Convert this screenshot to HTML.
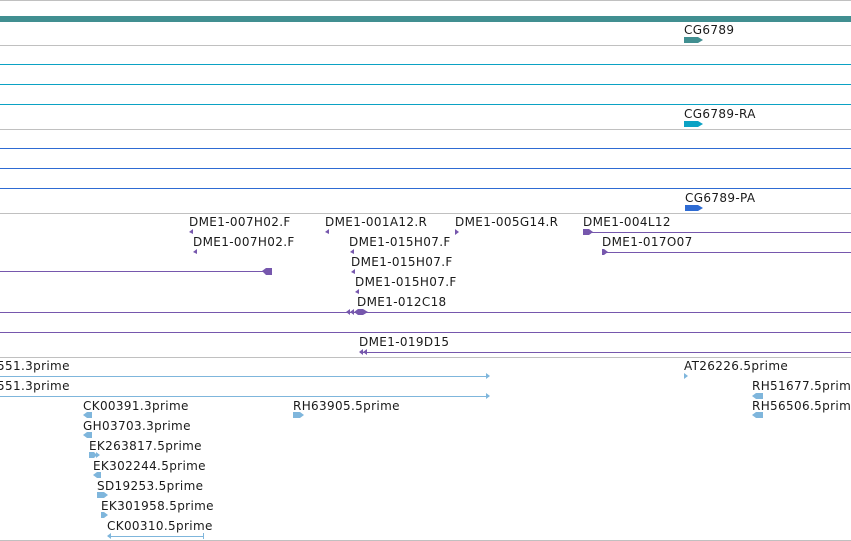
<!DOCTYPE html>
<html><head><meta charset="utf-8"><style>
html,body{margin:0;padding:0;background:#fff;width:851px;height:541px;overflow:hidden}
svg text{font-family:"DejaVu Sans","Liberation Sans",sans-serif;font-size:12px;letter-spacing:0.35px;fill:#1a1a1a}
</style></head><body>
<svg width="851" height="541" xmlns="http://www.w3.org/2000/svg">
<g stroke="#c0c0c0" stroke-width="1">
<line x1="0" y1="0.5" x2="851" y2="0.5"/>
<line x1="0" y1="45.5" x2="851" y2="45.5"/>
<line x1="0" y1="129.5" x2="851" y2="129.5"/>
<line x1="0" y1="213.5" x2="851" y2="213.5"/>
<line x1="0" y1="357.5" x2="851" y2="357.5"/>
<line x1="0" y1="540.5" x2="851" y2="540.5"/>
</g>
<rect x="0" y="16" width="851" height="6" fill="#418f91"/>
<g stroke="#0ba2c4" stroke-width="1">
<line x1="0" y1="64.5" x2="851" y2="64.5"/>
<line x1="0" y1="84.5" x2="851" y2="84.5"/>
<line x1="0" y1="104.5" x2="851" y2="104.5"/>
</g>
<g stroke="#2e6bd3" stroke-width="1">
<line x1="0" y1="148.5" x2="851" y2="148.5"/>
<line x1="0" y1="168.5" x2="851" y2="168.5"/>
<line x1="0" y1="188.5" x2="851" y2="188.5"/>
</g>
<text x="684" y="34">CG6789</text>
<path d="M684 37h14l5 3l-5 3h-14z" fill="#418f91"/>
<text x="684" y="118">CG6789-RA</text>
<path d="M684 121h14l5 3l-5 3h-14z" fill="#0ba2c4"/>
<text x="685" y="202">CG6789-PA</text>
<path d="M685 205h13l5 3l-5 3h-13z" fill="#2e6bd3"/>

<g fill="#7657ad" stroke="#7657ad">
<text x="189" y="226" stroke="none" style="fill:#1a1a1a">DME1-007H02.F</text>
<path d="M189 232l4-3v5z" stroke="none"/>
<text x="325" y="226" stroke="none" style="fill:#1a1a1a">DME1-001A12.R</text>
<path d="M325 232l4-3v5z" stroke="none"/>
<text x="455" y="226" stroke="none" style="fill:#1a1a1a">DME1-005G14.R</text>
<path d="M455 229l4 3l-4 3z" stroke="none"/>
<text x="583" y="226" stroke="none" style="fill:#1a1a1a">DME1-004L12</text>
<line x1="583" y1="232.5" x2="851" y2="232.5" stroke-width="1"/>
<path d="M583 229h6l4 3l-4 3h-6z" stroke="none"/>
<text x="193" y="246" stroke="none" style="fill:#1a1a1a">DME1-007H02.F</text>
<path d="M193 252l4-3v5z" stroke="none"/>
<text x="349" y="246" stroke="none" style="fill:#1a1a1a">DME1-015H07.F</text>
<path d="M350 252l4-3v5z" stroke="none"/>
<text x="602" y="246" stroke="none" style="fill:#1a1a1a">DME1-017O07</text>
<line x1="602" y1="252.5" x2="851" y2="252.5" stroke-width="1"/>
<path d="M602 249h2l4 3l-4 3h-2z" stroke="none"/>
<line x1="0" y1="271.5" x2="265" y2="271.5" stroke-width="1"/>
<path d="M262 271l4-3h6v7h-6z" stroke="none"/>
<text x="351" y="266" stroke="none" style="fill:#1a1a1a">DME1-015H07.F</text>
<path d="M351 272l4-3v5z" stroke="none"/>
<text x="355" y="286" stroke="none" style="fill:#1a1a1a">DME1-015H07.F</text>
<path d="M355 292l4-3v5z" stroke="none"/>
<text x="357" y="306" stroke="none" style="fill:#1a1a1a">DME1-012C18</text>
<line x1="0" y1="312.5" x2="851" y2="312.5" stroke-width="1"/>
<path d="M346 312l4-3v6z M350 312l4-3v6z M354 312l4-3h5l5 3l-5 3h-5z" stroke="none"/>
<line x1="0" y1="332.5" x2="851" y2="332.5" stroke-width="1"/>
<text x="359" y="346" stroke="none" style="fill:#1a1a1a">DME1-019D15</text>
<line x1="360" y1="352.5" x2="851" y2="352.5" stroke-width="1"/>
<path d="M359 352l4-3v6z M363 352l4-3v6z" stroke="none"/>
</g>

<g fill="#7fb6dc" stroke="#7fb6dc">
<text x="-3" y="370" stroke="none" style="fill:#1a1a1a">551.3prime</text>
<line x1="0" y1="376.5" x2="489" y2="376.5" stroke-width="1"/>
<path d="M486 373l4 3l-4 3z" stroke="none"/>
<text x="-3" y="390" stroke="none" style="fill:#1a1a1a">551.3prime</text>
<line x1="0" y1="396.5" x2="489" y2="396.5" stroke-width="1"/>
<path d="M486 393l4 3l-4 3z" stroke="none"/>
<text x="83" y="410" stroke="none" style="fill:#1a1a1a">CK00391.3prime</text>
<path d="M83 415l4-3h5v6h-5z" stroke="none"/>
<text x="83" y="430" stroke="none" style="fill:#1a1a1a">GH03703.3prime</text>
<path d="M83 435l4-3h5v6h-5z" stroke="none"/>
<text x="89" y="450" stroke="none" style="fill:#1a1a1a">EK263817.5prime</text>
<path d="M89 452h5l3 3l-3 3h-5z M96 452l4 3l-4 3z" stroke="none"/>
<text x="93" y="470" stroke="none" style="fill:#1a1a1a">EK302244.5prime</text>
<path d="M93 475l4-3h4v6h-4z" stroke="none"/>
<text x="97" y="490" stroke="none" style="fill:#1a1a1a">SD19253.5prime</text>
<path d="M97 492h7l4 3l-4 3h-7z" stroke="none"/>
<text x="101" y="510" stroke="none" style="fill:#1a1a1a">EK301958.5prime</text>
<path d="M101 512h3l4 3l-4 3h-3z" stroke="none"/>
<text x="107" y="530" stroke="none" style="fill:#1a1a1a">CK00310.5prime</text>
<line x1="108" y1="536.5" x2="203" y2="536.5" stroke-width="1"/>
<path d="M107 536l4-3v6z M204 533v6h-1v-6z" stroke="none"/>
<text x="293" y="410" stroke="none" style="fill:#1a1a1a">RH63905.5prime</text>
<path d="M293 412h7l4 3l-4 3h-7z" stroke="none"/>
<text x="684" y="370" stroke="none" style="fill:#1a1a1a">AT26226.5prime</text>
<path d="M684 373l4 3l-4 3z" stroke="none"/>
<text x="752" y="390" stroke="none" style="fill:#1a1a1a">RH51677.5prime</text>
<path d="M752 396l4-3h7v6h-7z" stroke="none"/>
<text x="752" y="410" stroke="none" style="fill:#1a1a1a">RH56506.5prime</text>
<path d="M752 415l4-3h7v6h-7z" stroke="none"/>
</g>
</svg>
</body></html>
